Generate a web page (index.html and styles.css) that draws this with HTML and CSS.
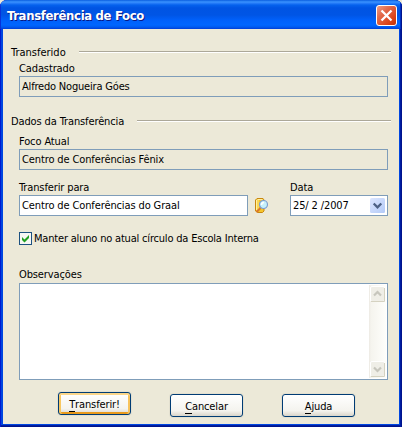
FILE: index.html
```html
<!DOCTYPE html>
<html lang="pt-BR">
<head>
<meta charset="utf-8">
<title>Transferência de Foco</title>
<link rel="stylesheet" href="styles.css">
</head>
<body>
<main class="window">
  <header class="titlebar">
    <h1 class="title">Transferência de Foco</h1>
    <svg class="close" width="21" height="21" viewBox="0 0 21 21">
      <defs><linearGradient id="red" x1="0" y1="0" x2="1" y2="1"><stop offset="0" stop-color="#f0a088"/><stop offset=".35" stop-color="#e26b4c"/><stop offset=".75" stop-color="#dc4216"/><stop offset="1" stop-color="#b83008"/></linearGradient></defs>
      <rect x=".5" y=".5" width="20" height="20" rx="2.5" fill="url(#red)" stroke="#fff"/>
      <path d="M5.500 5.500l10 10M15.500 5.500l-10 10" stroke="#fff" stroke-width="2.300"/>
    </svg>
  </header>
  <div class="client">
    <div class="group"><span class="wide">Transferido</span><i class="rule"></i></div>
    <section class="fields">
      <div class="label">Cadastrado</div>
      <div class="input readonly"><span class="tight">Alfredo Nogueira Góes</span></div>
    </section>
    <div class="group second"><span>Dados da Transferência</span><i class="rule"></i></div>
    <section class="fields after">
      <div class="label">Foco Atual</div>
      <div class="input readonly"><span>Centro de Conferências Fênix</span></div>
      <div class="row">
        <div class="target">
          <div class="label">Transferir para</div>
          <div class="input"><span>Centro de Conferências do Graal</span></div>
        </div>
        <svg class="lookup" width="15" height="17" viewBox="0 0 15 17">
          <path d="M1.500 2L3 .5h6L10 2v11l-1.500 1.500h-5L1.500 13z" fill="#f5c52c" stroke="#c88710"/>
          <path d="M2.500 2v10M3.500 1.500h5" stroke="#fff0a0"/>
          <path d="M4 2v11" stroke="#fbdc62" stroke-width="1.500"/>
          <path d="M6.500 10L2.500 14" stroke="#d9762c" stroke-width="2"/>
          <circle cx="9.500" cy="6.500" r="4" fill="#c5f0fc" stroke="#7c9cce" stroke-width="1.200"/>
          <path d="M7.500 7Q7.500 4.500 10 4.500" fill="none" stroke="#fff" stroke-width="1.500"/>
        </svg>
        <div class="date">
          <div class="label">Data</div>
          <div class="input"><span>25/ 2 /2007</span>
            <svg class="drop" width="15" height="15" viewBox="0 0 15 15">
              <defs><linearGradient id="blue" x1="0" y1="0" x2="1" y2="1"><stop offset="0" stop-color="#dce6ff"/><stop offset="1" stop-color="#b3caf7"/></linearGradient></defs>
              <rect width="15" height="15" rx="1.500" fill="url(#blue)"/>
              <path d="M3.700 5.500l3.800 3.800 3.800-3.800" fill="none" stroke="#4d6185" stroke-width="2.300"/>
            </svg>
          </div>
        </div>
      </div>
      <div class="check">
        <svg width="13" height="13" viewBox="0 0 13 13"><rect x=".5" y=".5" width="12" height="12" fill="#f7f7f4" stroke="#1c5180"/><path d="M3 5v3l2.500 2.500L10 6V3L5.500 7.500z" fill="#21a121"/></svg>
        <span class="tight">Manter aluno no atual círculo da Escola Interna</span>
      </div>
      <div class="label notes-label">Observações</div>
      <div class="notes">
        <div class="scroll">
          <svg width="15" height="16" viewBox="0 0 15 16"><rect x=".5" y=".5" width="14" height="15" rx="1.500" fill="#efeee7" stroke="#fff"/><path d="M1 15.500h13.500V2" fill="none" stroke="#d5d2c1"/><path d="M4 9.500l3.500-3.500L11 9.500" fill="none" stroke="#c7c6bd" stroke-width="2.200"/></svg>
          <svg width="15" height="16" viewBox="0 0 15 16"><rect x=".5" y=".5" width="14" height="15" rx="1.500" fill="#efeee7" stroke="#fff"/><path d="M1 15.500h13.500V2" fill="none" stroke="#d5d2c1"/><path d="M4 6.500l3.500 3.500L11 6.500" fill="none" stroke="#c7c6bd" stroke-width="2.200"/></svg>
        </div>
      </div>
    </section>
    <footer class="actions">
      <div class="button primary"><span><u>T</u>ransferir!</span></div>
      <div class="button"><span><u>C</u>ancelar</span></div>
      <div class="button"><span><u>A</u>juda</span></div>
    </footer>
  </div>
</main>
</body>
</html>
```
FILE: styles.css
```css
* { box-sizing: border-box; }
html { background: #ece9d8; }
body { margin: 0; font: 11px/15px "DejaVu Sans Condensed", "DejaVu Sans", sans-serif; font-stretch: condensed; letter-spacing: -.12px; color: #000; }
.window {
  width: 402px; height: 427px; padding: 0 3px 3px; overflow: hidden;
  border-radius: 7px 7px 0 0; background: #0046e0;
  box-shadow: inset 1px 0 #0019cf, inset -1px 0 #00138c, inset -2px 0 #001da0, inset 0 -1px #00138c, inset 0 -2px #001da0;
}
.titlebar {
  height: 29px; margin: 0 -3px; padding: 5px 5px 0 7px; display: flex; justify-content: space-between;
  background: linear-gradient(#0a5ee0 0, #3a93ff 2px, #2a80fa 3px, #0562ee 5px, #0054e3 8px, #0055e5 15px, #0060fa 20px, #0066ff 25px, #005bf0 27px, #003dd7 29px);
  box-shadow: inset 1px 0 #0831d9, inset -1px 0 #00138c, inset -2px 0 #0030c0;
}
.title { margin: 0; font: bold 13px/22px "DejaVu Sans Condensed", "DejaVu Sans", sans-serif; font-stretch: condensed; color: #fff; text-shadow: 1px 1px #0a1883; letter-spacing: -.35px; white-space: nowrap; }
.close { flex: none; }
.client { height: 395px; padding: 15px 8px 0; background: #ece9d8; }
span { white-space: nowrap; }
.wide { letter-spacing: 0; }
.tight { letter-spacing: -.19px; }
.group { height: 16px; display: flex; align-items: center; gap: 13px; }
.rule { flex: 1; height: 2px; border-top: 1px solid #aca899; border-bottom: 1px solid #fff; }
.second { margin-top: 16px; }
.fields { margin: 1px 3px 0 8px; }
.after { margin-top: 5px; }
.label { height: 15px; white-space: nowrap; }
.input { height: 21px; border: 1px solid #7f9db9; background: #fff; padding: 0 2px; display: flex; align-items: center; justify-content: space-between; }
.readonly { background: #ece9d8; }
.row { display: flex; margin-top: 10px; height: 36px; }
.target { width: 229px; }
.lookup { margin: 18px 21px 0 6px; flex: none; }
.date { width: 98px; }
.check { margin-top: 16px; height: 13px; display: flex; align-items: center; gap: 2px; }
.check svg { flex: none; }
.notes-label { margin-top: 22px; height: 16px; }
.notes { height: 97px; border: 1px solid #7f9db9; background: #fff; padding: 1px; display: flex; justify-content: flex-end; }
.scroll { width: 17px; padding: 1px; display: flex; flex-direction: column; justify-content: space-between; background: linear-gradient(90deg, #edeae4, #f5f4ee 2px, #fefefb); }
.actions { display: flex; margin: 12px 0 0 47px; }
.button { width: 73px; height: 23px; margin: 2px 0 0 39px; padding-top: 2px; border: 1px solid #003c74; border-radius: 3px; background: linear-gradient(#fff, #f4f3ee 75%, #d9d5ca); display: flex; align-items: center; justify-content: center; box-shadow: 0 0 0 1px #e3e0d0; }
.primary { margin: 0; box-shadow: inset 0 2px #fbd68a, inset 2px 0 #f8c761, inset -2px 0 #f8c35c, inset 0 -2px #e99a1b, 0 0 0 1px #e3e0d0; }
u { text-decoration: none; border-bottom: 1px solid #000; display: inline-block; line-height: 12px; }
```
